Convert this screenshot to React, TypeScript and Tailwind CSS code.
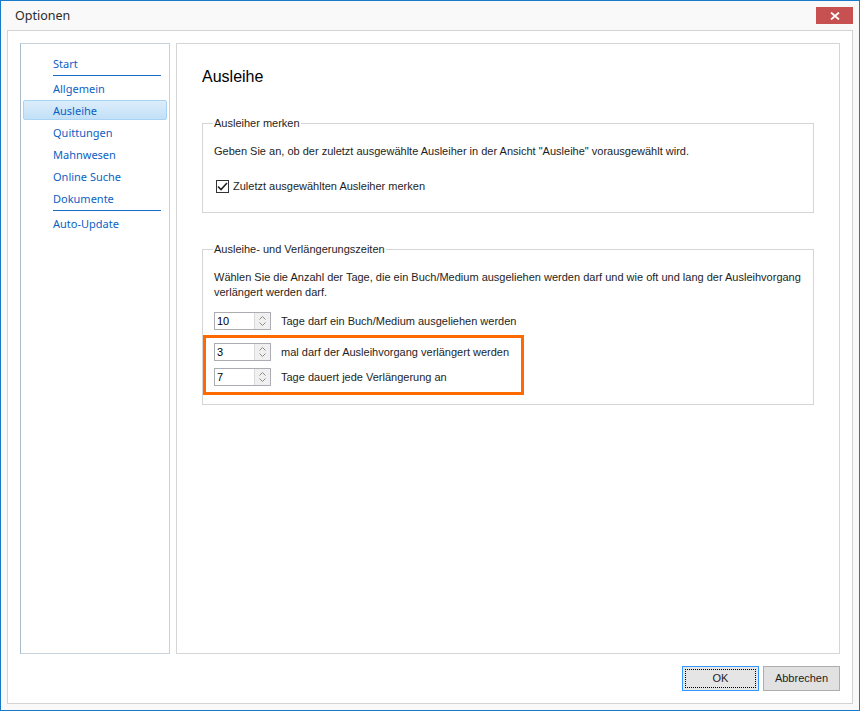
import React from "react";

const ui = { fontFamily: '"Liberation Sans", Arial, sans-serif' };
const seg = { fontFamily: '"Noto Sans", "Open Sans", sans-serif' };

function Spinner({ value }: { value: string }) {
  return (
    <div className="flex h-[18px] w-[57px] border border-[#abadb3] bg-white">
      <div className="flex flex-1 items-center pl-[2px] text-[11px] leading-none text-black">{value}</div>
      <div className="flex w-[16px] flex-col items-center justify-center gap-[2px] border-l border-[#d9d9d9] bg-[#f0f0f0]">
        <svg width="7" height="4" viewBox="0 0 7 4"><path d="M0.5 3.5 L3.5 0.5 L6.5 3.5" fill="none" stroke="#8a8a8a" strokeWidth="1" /></svg>
        <svg width="7" height="4" viewBox="0 0 7 4"><path d="M0.5 0.5 L3.5 3.5 L6.5 0.5" fill="none" stroke="#8a8a8a" strokeWidth="1" /></svg>
      </div>
    </div>
  );
}

function SpinRow({ value, label }: { value: string; label: string }) {
  return (
    <div className="flex h-[18px] items-center gap-[10px]">
      <Spinner value={value} />
      <span className="whitespace-nowrap text-[11px] leading-none text-[#1e1e1e]">{label}</span>
    </div>
  );
}

function Group({ title, children, className }: { title: string; children: React.ReactNode; className?: string }) {
  return (
    <fieldset className={"border border-[#d5d5d5] px-[11px] " + (className ?? "")}>
      <legend className="ml-[-1px] px-[1px] text-[11px] leading-[14px] text-[#1e1e1e]">{title}</legend>
      {children}
    </fieldset>
  );
}

const navItems = ["Start", "Allgemein", "Ausleihe", "Quittungen", "Mahnwesen", "Online Suche", "Dokumente", "Auto-Update"];

export default function App() {
  return (
    <div className="h-[711px] w-[860px] overflow-hidden bg-white" style={ui}>
      <div className="flex h-[711px] w-[860px] flex-col border border-[#1979ca] bg-[#f9f9f9]">
        {/* title bar */}
        <div className="flex h-[29px] items-start justify-between">
          <div className="pl-[14px] pt-[6px] text-[12.5px] leading-[18px] text-[#2b2b2b]" style={seg}>Optionen</div>
          <div className="mr-[6px] mt-[6px] flex h-[17px] w-[37px] items-center justify-center bg-[#c75050]">
            <svg width="10" height="8" viewBox="0 0 10 8">
              <path d="M1 0.5 L9 7.5 M9 0.5 L1 7.5" stroke="white" strokeWidth="1.8" />
            </svg>
          </div>
        </div>
        {/* inner area */}
        <div className="ml-[6px] mr-[6px] mb-[6px] flex flex-1 flex-col border border-[#d3d3d3] bg-white px-[12px] pt-[12px]">
          <div className="flex h-[611px] gap-[6px]">
            {/* nav */}
            <div className="w-[150px] border border-[#c6d2dc] border-l-[#a9bccb] pt-[9px]" style={seg}>
              <div className="flex flex-col">
                {navItems.map((n) => {
                  const selected = n === "Ausleihe";
                  return (
                    <React.Fragment key={n}>
                      {selected ? (
                        <div className="mx-[2px] mb-[2px] flex h-[20px] items-center rounded-[2px] border border-[#a8d3f3] bg-gradient-to-b from-[#dcedfb] to-[#c2e0f7] pl-[29px] text-[11px] leading-none text-[#0c5fc4]">
                          {n}
                        </div>
                      ) : (
                        <div className="flex h-[22px] items-center pl-[32px] pb-[1px] text-[11px] leading-none text-[#0c5fc4]">{n}</div>
                      )}
                      {(n === "Start" || n === "Dokumente") && (
                        <div className="ml-[32px] mr-[8px] mb-[2px] h-[1px] bg-[#1a6dc4]" />
                      )}
                    </React.Fragment>
                  );
                })}
              </div>
            </div>
            {/* content */}
            <div className="flex-1 border border-[#d5d5d5] px-[25px]">
              <div className="pt-[23px] text-[16px] leading-[20px] text-black">Ausleihe</div>
              <Group title="Ausleiher merken" className="mt-[29px] h-[97px]">
                <div className="pt-[14px] text-[11px] leading-[15px] text-[#1e1e1e]">
                  Geben Sie an, ob der zuletzt ausgewählte Ausleiher in der Ansicht "Ausleihe" vorausgewählt wird.
                </div>
                <div className="mt-[21px] flex items-center gap-[4px] pl-[2px]">
                  <div className="flex h-[13px] w-[13px] items-center justify-center border border-[#333] bg-white">
                    <svg width="11" height="9" viewBox="0 0 11 9">
                      <path d="M1 4.5 L4 7.5 L10 1" fill="none" stroke="#222" strokeWidth="1.6" />
                    </svg>
                  </div>
                  <span className="text-[11px] leading-none text-[#1e1e1e]">Zuletzt ausgewählten Ausleiher merken</span>
                </div>
              </Group>
              <Group title="Ausleihe- und Verlängerungszeiten" className="mt-[29px] h-[163px]">
                <div className="pt-[14px] text-[11px] leading-[15px] text-[#1e1e1e]">
                  Wählen Sie die Anzahl der Tage, die ein Buch/Medium ausgeliehen werden darf und wie oft und lang der Ausleihvorgang
                  <br />
                  verlängert werden darf.
                </div>
                <div className="mt-[12px]">
                  <SpinRow value="10" label="Tage darf ein Buch/Medium ausgeliehen werden" />
                </div>
                <div className="ml-[-11px] mt-[5px] flex w-[321px] flex-col gap-[7px] border-[3px] border-[#ff6a00] pb-[6px] pl-[8px] pt-[5px]">
                  <SpinRow value="3" label="mal darf der Ausleihvorgang verlängert werden" />
                  <SpinRow value="7" label="Tage dauert jede Verlängerung an" />
                </div>
              </Group>
            </div>
          </div>
          {/* buttons */}
          <div className="mt-[12px] flex justify-end gap-[4px]">
            <div className="flex h-[25px] w-[77px] items-center justify-center border border-[#3399ff] bg-[#e5e5e5] p-[2px]">
              <div className="flex h-full w-full items-center justify-center border border-dotted border-black text-[11px] text-[#1e1e1e]">
                OK
              </div>
            </div>
            <div className="flex h-[25px] w-[77px] items-center justify-center border border-[#adadad] bg-[#e1e1e1] text-[11px] text-[#1e1e1e]">
              Abbrechen
            </div>
          </div>
        </div>
      </div>
    </div>
  );
}
